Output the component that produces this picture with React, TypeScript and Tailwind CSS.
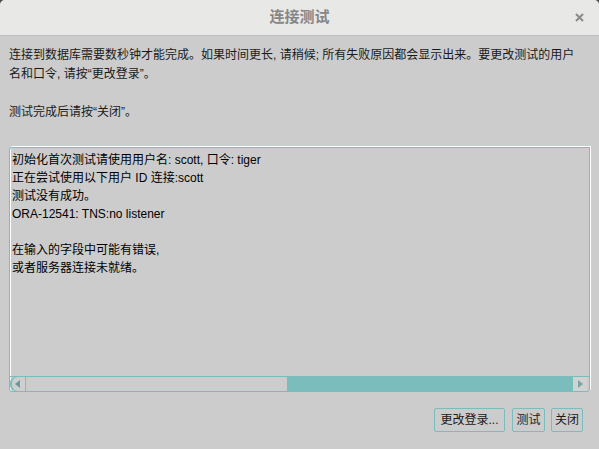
import { Fragment } from "react";

const log = [
  "初始化首次测试请使用用户名: scott, 口令: tiger",
  "正在尝试使用以下用户 ID 连接:scott",
  "测试没有成功。",
  "ORA-12541: TNS:no listener",
  "",
  "在输入的字段中可能有错误,",
  "或者服务器连接未就绪。",
];

const buttons = [
  { label: "更改登录...", cls: "w-[71px] mr-[7px]" },
  { label: "测试", cls: "w-[33px] mr-[6px]" },
  { label: "关闭", cls: "w-[32px]" },
];

const App = () => {
  return (
    <div className="w-[599px] h-[449px] bg-[#4a4a4a] font-['Liberation_Sans','Noto_Sans_CJK_SC',sans-serif] text-[12px] text-[#1a1a1a]">
      <div className="flex h-full flex-col overflow-hidden rounded-t-[5px] bg-[#cccccc]">
        {/* Title bar */}
        <div className="relative flex h-[36px] shrink-0 items-center justify-center border-b border-[#bdbdbd] bg-[#e8e8e7]">
          <span className="text-[15px] font-bold text-[#868686]">连接测试</span>
          <svg
            className="absolute right-[15px] top-[13px]"
            width="9"
            height="9"
            viewBox="0 0 9 9"
          >
            <path d="M1 1 L8 8 M8 1 L1 8" stroke="#8a8a8a" strokeWidth="2" />
          </svg>
        </div>

        {/* Body */}
        <div className="flex flex-1 flex-col px-[9px]">
          <p className="pt-[10px] leading-[19px]">
            连接到数据库需要数秒钟才能完成。如果时间更长, 请稍候; 所有失败原因都会显示出来。要更改测试的用户
            <br />
            名和口令, 请按“更改登录”。
            <br />
            <br />
            测试完成后请按“关闭”。
          </p>

          {/* Output box */}
          <div className="mt-[25px] flex h-[245px] flex-col rounded-tl-[3px] rounded-b-[3px] border border-[#7bbcbc] shadow-[inset_1px_0_0_#ffffff,1px_-1px_0_#ffffff]">
            <div className="flex-1 pl-[2px] pt-[3px] leading-[18px] text-black">
              {log.map((line, i) => (
                <Fragment key={i}>
                  {line === "" ? <div className="h-[18px]" /> : <div>{line}</div>}
                </Fragment>
              ))}
            </div>

            {/* Horizontal scrollbar */}
            <div className="flex h-[15px] shrink-0 border-t border-[#7bbcbc]">
              <div className="flex w-[16px] items-center justify-center rounded-bl-[6px] rounded-tl-[6px] border-r border-[#7bbcbc] bg-[#cfcfcf] shadow-[inset_2px_0_0_#7bbcbc]">
                <svg width="5" height="8" viewBox="0 0 5 8">
                  <path d="M5 0 L0 4 L5 8 Z" fill="#6a9a9a" />
                </svg>
              </div>
              <div className="w-[261px] bg-[#cccccc]" />
              <div className="w-[286px] bg-[#7bbcbc]" />
              <div className="flex w-[14px] items-center justify-center rounded-br-[2px] bg-[#d2d2d2]">
                <svg width="5" height="8" viewBox="0 0 5 8">
                  <path d="M0 0 L5 4 L0 8 Z" fill="#7aa5a5" />
                </svg>
              </div>
            </div>
          </div>

          {/* Buttons */}
          <div className="mt-[16px] flex justify-end pr-[7px]">
            {buttons.map((b) => (
              <button
                key={b.label}
                className={`h-[24px] rounded-[2px] border border-[#7bbcbc] bg-[#cccccc] text-center leading-[22px] text-[#1a1a1a] ${b.cls}`}
              >
                {b.label}
              </button>
            ))}
          </div>
        </div>
      </div>
    </div>
  );
};

export default App;
